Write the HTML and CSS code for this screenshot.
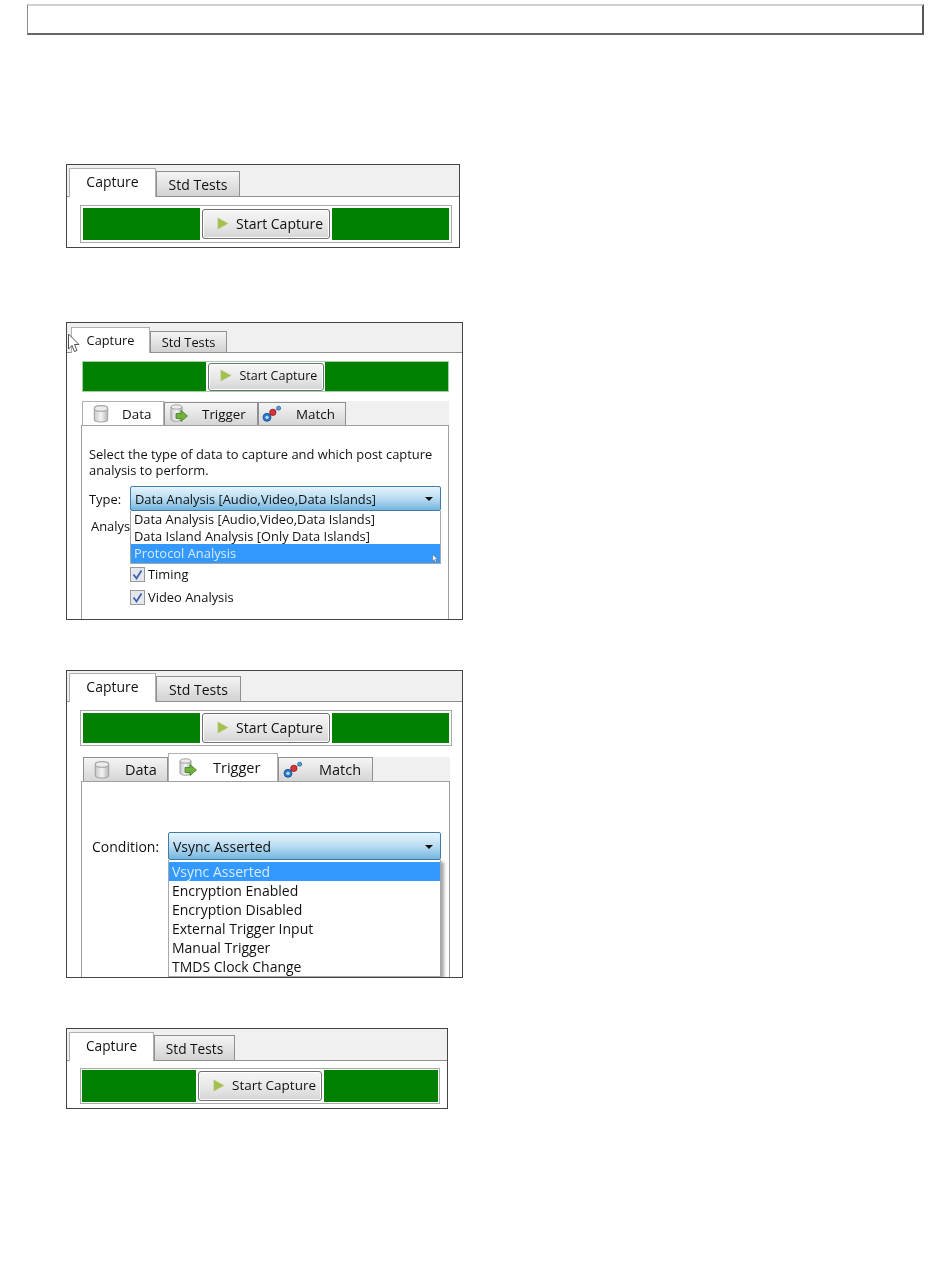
FILE: index.html
```html
<!DOCTYPE html>
<html lang="en">
<head>
  <meta charset="UTF-8">
  <meta name="viewport" content="width=device-width, initial-scale=1.0">
  <title>Capture settings</title>
  <link rel="stylesheet" href="styles.css">
</head>
<body>
  <svg class="icon-defs" aria-hidden="true">
    <defs>
      <linearGradient id="can" x1="0" x2="1" y1="0" y2="0">
        <stop offset="0" stop-color="#c9c9c9"/><stop offset="0.5" stop-color="#f4f4f4"/><stop offset="1" stop-color="#b5b5b5"/>
      </linearGradient>
      <symbol id="play" viewBox="0 0 14 14">
        <path d="M2 1 L13 7 L2 13 Z" fill="#a3bf4e" stroke="#b9cf7c" stroke-width="0.6"/>
      </symbol>
      <symbol id="data" viewBox="0 0 18 18">
        <path d="M3 4 V14 C3 17 15 17 15 14 V4 Z" fill="url(#can)" stroke="#a5a5a5"/>
        <ellipse cx="9" cy="4" rx="6" ry="2.5" fill="#ececec" stroke="#a5a5a5"/>
      </symbol>
      <symbol id="trigger" viewBox="0 0 20 20">
        <path d="M2 3 V15 C2 18 13 18 13 15 V3 Z" fill="url(#can)" stroke="#a0a0a0"/>
        <ellipse cx="7.5" cy="3" rx="5.5" ry="2.2" fill="#ececec" stroke="#a0a0a0"/>
        <path d="M7 9.5 H12 V6.5 L18.5 12 L12 17.5 V14.5 H7 Z" fill="#6fb23c" stroke="#3f7f22" stroke-width="0.8"/>
      </symbol>
      <symbol id="match" viewBox="0 0 24 20">
        <path d="M6 14 L13 8 L20 3" stroke="#8a8a8a" stroke-width="1" fill="none"/>
        <circle cx="6" cy="14" r="4.8" fill="#2f78c8" stroke="#174f94"/>
        <circle cx="6" cy="14" r="2" fill="#bcd9f5"/>
        <circle cx="13" cy="8" r="3.8" fill="#d8343a" stroke="#94181c"/>
        <circle cx="20" cy="3" r="2.4" fill="#4f9ed8" stroke="#2a6c9f"/>
      </symbol>
      <symbol id="check" viewBox="0 0 15 15">
        <rect x="0.5" y="0.5" width="14" height="14" fill="#e4e8ec" stroke="#9a9a9a"/>
        <path d="M3.5 7.5 L6.5 11.5 L11.5 3.5" fill="none" stroke="#3f5fb0" stroke-width="1.8"/>
      </symbol>
      <symbol id="pointer" viewBox="0 0 12 20">
        <path d="M1 1 V16 L4.5 12.5 L7 18.5 L9.5 17.5 L7 11.5 H11.5 Z" fill="#fff" stroke="#555" stroke-width="1"/>
      </symbol>
    </defs>
  </svg>

  <div class="page">
    <div class="title-box"></div>

    <!-- Idle state -->
    <section class="shot shot-idle">
      <div class="tabs">
        <div class="tab tab-on tab-capture">Capture</div>
        <div class="tab tab-tests">Std Tests</div>
      </div>
      <div class="bar">
        <div class="bar-fill"></div>
        <button class="start"><svg class="play"><use href="#play"/></svg>Start Capture</button>
        <div class="bar-fill"></div>
      </div>
    </section>

    <!-- Data tab, type list open -->
    <section class="shot shot-data">
      <svg class="pointer"><use href="#pointer"/></svg>
      <div class="tabs">
        <div class="tab tab-on tab-capture">Capture</div>
        <div class="tab tab-tests">Std Tests</div>
      </div>
      <div class="bar">
        <div class="bar-fill"></div>
        <button class="start"><svg class="play"><use href="#play"/></svg>Start Capture</button>
        <div class="bar-fill"></div>
      </div>
      <div class="subtabs">
        <div class="subtab subtab-on sub-data"><svg class="sub-icon"><use href="#data"/></svg>Data</div>
        <div class="subtab sub-trigger"><svg class="sub-icon"><use href="#trigger"/></svg>Trigger</div>
        <div class="subtab sub-match"><svg class="sub-icon"><use href="#match"/></svg>Match</div>
      </div>
      <div class="panel">
        <p class="intro">Select the type of data to capture and which post capture analysis to perform.</p>
        <div class="field">
          <span class="field-label">Type:</span>
          <div class="combo">
            <span>Data Analysis [Audio,Video,Data Islands]</span>
            <i class="arrow"></i>
            <ul class="list">
              <li>Data Analysis [Audio,Video,Data Islands]</li>
              <li>Data Island Analysis [Only Data Islands]</li>
              <li class="picked">Protocol Analysis<svg class="mini-pointer"><use href="#pointer"/></svg></li>
            </ul>
          </div>
        </div>
        <div class="analysis-label">Analys</div>
        <div class="checks">
          <label class="check"><svg class="box"><use href="#check"/></svg>Timing</label>
          <label class="check"><svg class="box"><use href="#check"/></svg>Video Analysis</label>
        </div>
      </div>
    </section>

    <!-- Trigger tab, condition list open -->
    <section class="shot shot-trigger">
      <div class="tabs">
        <div class="tab tab-on tab-capture">Capture</div>
        <div class="tab tab-tests">Std Tests</div>
      </div>
      <div class="bar">
        <div class="bar-fill"></div>
        <button class="start"><svg class="play"><use href="#play"/></svg>Start Capture</button>
        <div class="bar-fill"></div>
      </div>
      <div class="subtabs">
        <div class="subtab sub-data"><svg class="sub-icon"><use href="#data"/></svg>Data</div>
        <div class="subtab subtab-on sub-trigger"><svg class="sub-icon"><use href="#trigger"/></svg>Trigger</div>
        <div class="subtab sub-match"><svg class="sub-icon"><use href="#match"/></svg>Match</div>
      </div>
      <div class="panel">
        <div class="field">
          <span class="field-label">Condition:</span>
          <div class="combo">
            <span>Vsync Asserted</span>
            <i class="arrow"></i>
            <ul class="list">
              <li class="picked">Vsync Asserted</li>
              <li>Encryption Enabled</li>
              <li>Encryption Disabled</li>
              <li>External Trigger Input</li>
              <li>Manual Trigger</li>
              <li>TMDS Clock Change</li>
            </ul>
          </div>
        </div>
      </div>
    </section>

    <!-- Idle state, smaller -->
    <section class="shot shot-small">
      <div class="tabs">
        <div class="tab tab-on tab-capture">Capture</div>
        <div class="tab tab-tests">Std Tests</div>
      </div>
      <div class="bar">
        <div class="bar-fill"></div>
        <button class="start"><svg class="play"><use href="#play"/></svg>Start Capture</button>
        <div class="bar-fill"></div>
      </div>
    </section>
  </div>
</body>
</html>
```

FILE: styles.css
```css
/* General styles */
html, body {
  margin: 0;
  height: 1267px;
  overflow: hidden;
}

body {
  background-color: #fff;
  color: #111;
  font-family: "Open Sans", "Noto Sans", sans-serif;
}

.icon-defs {
  display: block;
  width: 0;
  height: 0;
}

.page {
  padding: 4px 0 0 27px;
}

.title-box {
  box-sizing: border-box;
  width: 897px;
  height: 31px;
  border-top: 2px solid #cfcfcf;
  border-left: 1px solid #8a8a8a;
  border-right: 2px solid #555;
  border-bottom: 2px solid #666;
}

/* Screenshot frames */
.shot {
  position: relative;
  box-sizing: border-box;
  margin-left: 39px;
  border: 1px solid #444;
  background-color: #fff;
  overflow: hidden;
  filter: blur(0.25px);
}

.shot-idle {
  width: 394px;
  height: 84px;
  margin-top: 129px;
}

.shot-data {
  width: 397px;
  height: 298px;
  margin-top: 74px;
  filter: blur(0.5px);
}

.shot-trigger {
  width: 397px;
  height: 308px;
  margin-top: 50px;
}

.shot-small {
  width: 382px;
  height: 81px;
  margin-top: 50px;
}

/* Top tabs */
.tabs {
  display: flex;
  align-items: flex-end;
  height: 31px;
  padding-left: 2px;
  background-color: #f0f0f0;
  border-bottom: 1px solid #909090;
}

.tab {
  box-sizing: border-box;
  height: 25px;
  border: 1px solid #909090;
  border-bottom: none;
  background: linear-gradient(#f4f4f4, #d2d2d2);
  font-size: 14px;
  line-height: 25px;
  text-align: center;
}

.tab-capture {
  width: 87px;
}

.tab-tests {
  width: 85px;
}

.tab-on {
  height: 29px;
  margin-bottom: -1px;
  border-color: #b0b0b0;
  background: #fff;
  line-height: 26px;
}

.shot-idle .tab-tests {
  width: 84px;
}

.shot-data .tabs {
  height: 29px;
  padding-left: 4px;
}

.shot-data .tab {
  height: 21px;
  font-size: 12.8px;
  line-height: 21px;
}

.shot-data .tab-on {
  height: 26px;
  line-height: 24px;
}

.shot-data .tab-capture {
  width: 79px;
}

.shot-data .tab-tests {
  width: 77px;
}

.shot-trigger .tabs {
  height: 30px;
}

.shot-small .tab {
  font-size: 13.7px;
}

.shot-small .tab-capture {
  width: 85px;
}

.shot-small .tab-tests {
  width: 81px;
}

/* Green capture bar */
.bar {
  box-sizing: border-box;
  display: flex;
  align-items: center;
  gap: 2px;
  width: 372px;
  height: 38px;
  margin: 8px 0 0 13px;
  padding: 2px;
  border: 1px solid #a4aca4;
}

.bar-fill {
  flex: 1;
  align-self: stretch;
  background-color: #008000;
}

.start {
  display: flex;
  align-items: center;
  box-sizing: border-box;
  width: 128px;
  height: 30px;
  padding: 0 0 2px 13px;
  border: 1px solid #6f6f6f;
  border-radius: 3px;
  background: linear-gradient(#f6f6f6 0%, #e9e9e9 50%, #d5d5d5 100%);
  box-shadow: inset 0 0 0 1px #fff;
  color: #111;
  font-family: inherit;
  font-size: 14px;
  white-space: nowrap;
}

.play {
  flex: none;
  width: 13px;
  height: 13px;
  margin-right: 7px;
}

.shot-data .bar {
  gap: 1.5px;
  width: 367px;
  height: 31px;
  margin: 8px 0 0 15px;
  padding: 0;
  border-color: #a7cfa7;
}

.shot-data .start {
  width: 116px;
  height: 28px;
  padding-left: 10px;
  font-size: 12.5px;
}

.shot-data .play {
  margin-right: 8px;
}

.shot-trigger .bar {
  height: 36px;
}

.shot-small .bar {
  width: 360px;
  height: 36px;
  margin-top: 7px;
  padding: 1px;
}

.shot-small .start {
  width: 124px;
  font-size: 13.5px;
}

/* Inner tabs */
.subtabs {
  display: flex;
  align-items: flex-end;
  height: 24px;
  margin: 9px 13px 0 15px;
  background-color: #f0f0f0;
}

.subtab {
  display: flex;
  align-items: center;
  box-sizing: border-box;
  height: 24px;
  border: 1px solid #909090;
  border-bottom: none;
  background: linear-gradient(#f4f4f4, #d6d6d6);
  font-size: 13px;
}

.subtab-on {
  height: 28px;
  border-color: #b0b0b0;
  background: #fff;
}

.sub-icon {
  flex: none;
  width: 20px;
  height: 20px;
}

.sub-data {
  width: 82px;
  padding-left: 8px;
  gap: 11px;
}

.sub-trigger {
  width: 94px;
  padding-left: 4px;
  gap: 13px;
}

.sub-match {
  width: 88px;
  padding-left: 3px;
  gap: 14px;
}

.shot-data .subtab {
  height: 23px;
  font-size: 13.4px;
}

.shot-data .subtab-on {
  height: 24px;
}

.shot-trigger .subtabs {
  margin: 11px 12px 0 16px;
}

.shot-trigger .sub-data {
  width: 85px;
  gap: 13px;
}

.shot-trigger .sub-trigger {
  width: 110px;
  padding-left: 9px;
  gap: 15px;
}

.shot-trigger .sub-match {
  width: 95px;
  padding-left: 4px;
  gap: 16px;
}

.shot-trigger .subtab {
  font-size: 14.5px;
}

.panel {
  box-sizing: border-box;
  height: 220px;
  margin: 0 13px 0 14px;
  border: 1px solid #a0a0a0;
  background-color: #fff;
  font-size: 12.9px;
}

.shot-trigger .panel {
  margin-right: 12px;
}

.intro {
  width: 355px;
  margin: 20px 0 0 7px;
  line-height: 16px;
}

/* Combo boxes */
.field {
  display: flex;
  align-items: center;
  margin-top: 8px;
  padding-left: 7px;
}

.field-label {
  width: 41px;
}

.combo {
  position: relative;
  box-sizing: border-box;
  display: flex;
  align-items: center;
  width: 311px;
  height: 25px;
  padding-left: 4px;
  border: 1px solid #3f7da6;
  border-radius: 2px;
  background: linear-gradient(#e6f4fc 0%, #b9dcf2 50%, #74b6de 100%);
  white-space: nowrap;
}

.arrow {
  position: absolute;
  right: 7px;
  top: 10px;
  border-top: 4px solid #111;
  border-left: 4px solid transparent;
  border-right: 4px solid transparent;
}

.list {
  position: absolute;
  left: -1px;
  top: 24px;
  box-sizing: border-box;
  width: 311px;
  margin: 0;
  padding: 0;
  list-style: none;
  border: 1px solid #a8a8a8;
  border-top: none;
  background-color: #fff;
}

.list li {
  position: relative;
  padding-left: 3px;
  line-height: 17px;
}

.list .picked {
  margin-top: -1px;
  background-color: #3399ff;
  color: #d6ebff;
  line-height: 19px;
}

.mini-pointer {
  position: absolute;
  right: 2px;
  bottom: 0;
  width: 6px;
  height: 9px;
}

.analysis-label {
  margin: 6px 0 0 9px;
}

.checks {
  display: flex;
  flex-direction: column;
  gap: 5px;
  margin: 30px 0 0 48px;
}

.check {
  display: flex;
  align-items: center;
  gap: 3px;
}

.box {
  flex: none;
  width: 15px;
  height: 15px;
}

.pointer {
  position: absolute;
  left: 0;
  top: 10px;
  width: 13px;
  height: 20px;
}

/* Condition list sizes */
.shot-trigger .panel {
  font-size: 14px;
}

.shot-trigger .field {
  margin-top: 50px;
  padding-left: 10px;
}

.shot-trigger .field-label {
  width: 76px;
}

.shot-trigger .combo {
  width: 273px;
  height: 28px;
}

.shot-trigger .arrow {
  top: 12px;
}

.shot-trigger .list {
  top: 27px;
  width: 273px;
  padding-top: 2px;
  box-shadow: 3px 2px 3px rgba(0, 0, 0, 0.35);
}

.shot-trigger .list li {
  line-height: 19px;
}

.shot-trigger .list .picked {
  margin-top: 0;
}
```
